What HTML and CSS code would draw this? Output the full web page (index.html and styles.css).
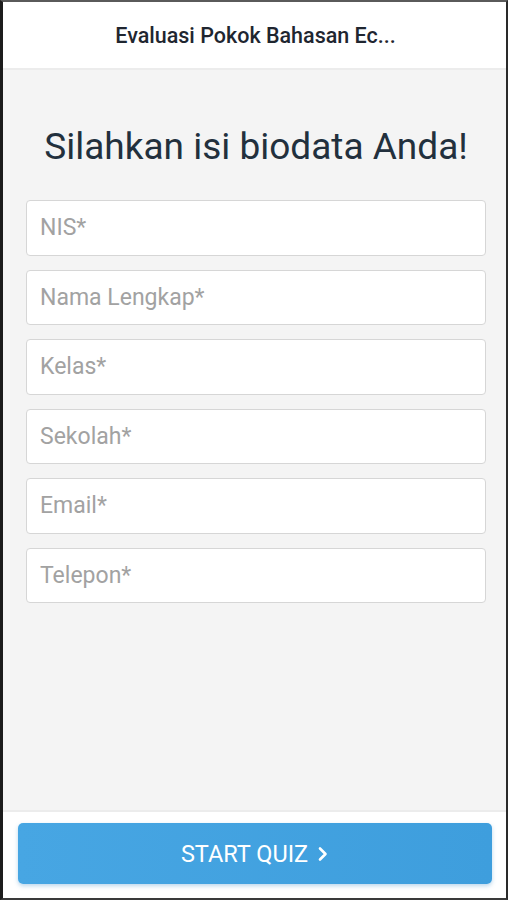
FILE: index.html
```html
<!DOCTYPE html>
<html>
<head>
<meta charset="utf-8">
<link rel="stylesheet" href="styles.css">
</head>
<body>
<div class="frame">
  <header class="topbar"><h1 class="topbar-title">Evaluasi Pokok Bahasan Ec...</h1></header>
  <main class="content">
    <h2 class="heading">Silahkan isi biodata Anda!</h2>
    <form class="form">
      <input class="field" type="text" placeholder="NIS*">
      <input class="field" type="text" placeholder="Nama Lengkap*">
      <input class="field" type="text" placeholder="Kelas*">
      <input class="field" type="text" placeholder="Sekolah*">
      <input class="field" type="text" placeholder="Email*">
      <input class="field" type="text" placeholder="Telepon*">
    </form>
  </main>
  <footer class="footer">
    <button class="start" type="button">START QUIZ <svg class="chev" width="12" height="16" viewBox="0 0 12 16"><path d="M3 2.5 L8.5 8 L3 13.5" fill="none" stroke="#fff" stroke-width="2.6" stroke-linecap="round" stroke-linejoin="round"/></svg></button>
  </footer>
</div>
</body>
</html>
```
FILE: styles.css
```css
* { box-sizing: border-box; }
html, body { margin: 0; padding: 0; }
body { font-family: Roboto, "Noto Sans", sans-serif; background: #fff; }
.frame {
  width: 508px; height: 900px;
  display: flex; flex-direction: column;
  border-left: 3px solid #1c1c1c;
  border-right: 2px solid #2a2a2a;
  border-top: 2px solid #5a5a5a;
  border-bottom: 2px solid #3a3a3a;
  background: #f4f4f4;
}
.topbar {
  height: 68px; flex: none;
  background: #fff;
  border-bottom: 2px solid #ececec;
  display: flex; align-items: center; justify-content: center;
}
.topbar-title {
  margin: 0 0 0 2px; font-size: 21.5px; font-weight: 500; color: #1f2630;
}
.content { flex: 1; padding: 0 20px 0 23px; }
.heading {
  margin: 54px 0 30px; text-align: center;
  font-size: 37px; font-weight: 400; color: #22303d; line-height: 46px;
}
.form { display: flex; flex-direction: column; gap: 14px; }
.field {
  height: 55.5px; width: 100%;
  border: 1px solid #d6d6d6; border-radius: 4px;
  background: #fff; padding: 0 13px;
  font-family: Roboto, sans-serif; font-size: 23px; color: #333;
  outline: none;
}
.field::placeholder { color: #a2a2a2; }
.footer {
  height: 88px; flex: none; background: #fff;
  border-top: 2px solid #ececec;
  padding: 11px 14px 0 15px;
}
.start {
  width: 100%; height: 61px;
  border: none; border-radius: 5px;
  background: linear-gradient(90deg, #47a6e3, #3e9edd);
  box-shadow: 0 2px 4px rgba(60,140,200,0.35);
  color: #fff; font-family: Roboto, sans-serif; font-size: 23.5px; font-weight: 400;
  display: flex; align-items: center; justify-content: center; gap: 9px;
}
.chev { display: block; margin-top: 1px; }
```
